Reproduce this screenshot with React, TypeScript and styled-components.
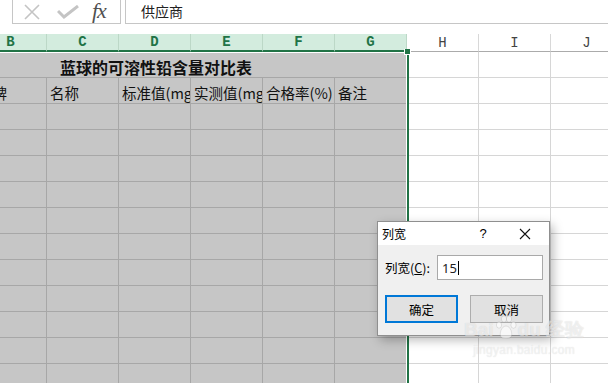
import React from "react";
import styled, { createGlobalStyle } from "styled-components";

const GREEN = "#217346";

const GlobalStyle = createGlobalStyle`
  html, body {
    margin: 0;
    padding: 0;
    background: #fff;
  }
  body {
    font-family: "Noto Sans CJK SC", "Liberation Sans", sans-serif;
  }
`;

const SWindow = styled.div`
  position: relative;
  width: 608px;
  height: 383px;
  overflow: hidden;
  background: #fff;
`;

/* formula bar */
const SFormulaBar = styled.div`
  display: flex;
  align-items: flex-start;
  gap: 4px;
  height: 34px;
  padding-left: 12px;
`;

const SIconBox = styled.div`
  display: flex;
  align-items: center;
  width: 109px;
  height: 24px;
  box-sizing: border-box;
  border: 1px solid #c6c6c6;
  border-top: none;
  padding-left: 10px;
  gap: 16px;
`;

const SFx = styled.span`
  font-family: "Liberation Serif", serif;
  font-style: italic;
  font-size: 22px;
  letter-spacing: -1px;
  color: #505050;
  line-height: 1;
  margin-left: -3px;
  margin-top: -2px;
`;

const SFormulaInput = styled.div`
  flex: 1;
  height: 24px;
  box-sizing: border-box;
  border-left: 1px solid #c6c6c6;
  border-bottom: 1px solid #c6c6c6;
  padding-left: 15px;
  font-size: 14px;
  line-height: 23px;
  color: #222;
`;

/* sheet */
const SSheet = styled.div`
  display: grid;
  grid-template-columns: repeat(10, 72px);
  grid-template-rows: 18px;
  grid-auto-rows: 26px;
  margin-left: -97px;
  width: 720px;
`;

const SHeaderCell = styled.div<{ $selected?: boolean }>`
  height: 18px;
  box-sizing: border-box;
  display: flex;
  align-items: center;
  justify-content: center;
  font-family: "Liberation Mono", monospace;
  font-size: 14px;
  font-weight: ${(p) => (p.$selected ? 700 : 400)};
  color: ${(p) => (p.$selected ? GREEN : "#444")};
  background: ${(p) => (p.$selected ? "#d3ecde" : "#fff")};
  border-right: 1px solid ${(p) => (p.$selected ? "#bcd8c7" : "#d8d8d8")};
  border-bottom: ${(p) => (p.$selected ? `2px solid ${GREEN}` : "1px solid #ababab")};
`;

const SCell = styled.div<{ $selected?: boolean; $span?: number; $bold?: boolean; $center?: boolean }>`
  box-sizing: border-box;
  grid-column: span ${(p) => p.$span || 1};
  display: flex;
  align-items: flex-end;
  justify-content: ${(p) => (p.$center ? "center" : "flex-start")};
  padding: 0 0 1px 3px;
  overflow: hidden;
  white-space: nowrap;
  font-size: ${(p) => (p.$bold ? "16px" : "14.5px")};
  font-weight: ${(p) => (p.$bold ? 700 : 400)};
  line-height: 18px;
  color: #111;
  background: ${(p) => (p.$selected ? "#c6c6c6" : "#fff")};
  border-right: 1px solid ${(p) => (p.$selected ? "#a7a7a7" : "#d6d6d6")};
  border-bottom: 1px solid ${(p) => (p.$selected ? "#a7a7a7" : "#d6d6d6")};
`;

const SHeaderRow = styled.div`
  display: contents;
`;

/* selection overlay */
const SSelection = styled.div`
  position: absolute;
  left: 0;
  top: 52px;
  width: 409px;
  bottom: 0;
  box-sizing: border-box;
  border-right: 2px solid ${GREEN};
  box-shadow: inset -1px 0 0 #fff, inset 0 1px 0 #fff;
  pointer-events: none;
`;

const SFillHandle = styled.div`
  position: absolute;
  left: 404px;
  top: 49px;
  width: 5px;
  height: 5px;
  background: ${GREEN};
  border: 1px solid #fff;
  border-top: none;
`;

/* dialog */
const SDialog = styled.div`
  position: absolute;
  left: 377px;
  top: 221px;
  width: 173px;
  height: 115px;
  box-sizing: border-box;
  border: 1px solid #8f8f8f;
  background: #f0f0f0;
  box-shadow: 3px 4px 10px rgba(0, 0, 0, 0.28);
  display: flex;
  flex-direction: column;
  font-size: 12px;
  color: #000;
`;

const STitleBar = styled.div`
  display: flex;
  align-items: center;
  height: 23px;
  background: #fff;
  padding-left: 4px;
`;

const STitleText = styled.span`
  flex: 1;
  font-size: 12px;
`;

const STitleButton = styled.div<{ $w: number }>`
  width: ${(p) => p.$w}px;
  display: flex;
  justify-content: center;
  align-items: center;
  font-size: 13px;
  font-family: "Liberation Sans", sans-serif;
`;

const SDialogBody = styled.div`
  display: flex;
  flex-direction: column;
  padding: 10px 6px 0 7px;
`;

const SFieldRow = styled.div`
  display: flex;
  align-items: center;
  justify-content: space-between;
`;

const SLabel = styled.span`
  font-size: 12.5px;
  & u {
    text-decoration-thickness: 1px;
  }
`;

const SInput = styled.div`
  width: 106px;
  height: 25px;
  box-sizing: border-box;
  border: 1px solid #a9a9a9;
  background: #fff;
  display: flex;
  align-items: center;
  padding-left: 4px;
  font-family: "Noto Sans", sans-serif;
  font-size: 13px;
  color: #222;
`;

const SCaret = styled.span`
  display: inline-block;
  width: 1px;
  height: 14px;
  background: #000;
  margin-left: 1px;
`;

const SButtonRow = styled.div`
  display: flex;
  justify-content: space-between;
  margin-top: 15px;
`;

const SButton = styled.div<{ $primary?: boolean }>`
  width: 73px;
  height: 28px;
  box-sizing: border-box;
  display: flex;
  align-items: center;
  justify-content: center;
  background: #e1e1e1;
  border: ${(p) => (p.$primary ? "2px solid #0078d7" : "1px solid #adadad")};
  font-size: 12.5px;
`;

/* watermark */
const SWatermark = styled.div`
  position: absolute;
  left: 464px;
  top: 314px;
  display: flex;
  flex-direction: column;
  align-items: center;
  color: rgba(255, 255, 255, 0.55);
  text-shadow: 0 0 1px rgba(0, 0, 0, 0.15);
  pointer-events: none;
  font-family: "Liberation Sans", sans-serif;
`;

const SWmTop = styled.div`
  display: flex;
  align-items: flex-end;
  font-size: 19px;
  font-weight: 700;
  line-height: 21px;
  gap: 1px;
`;

const SWmSub = styled.div`
  font-size: 12px;
  letter-spacing: 0.3px;
  margin-top: 3px;
`;

const CancelIcon = () => (
  <svg width="18" height="16" viewBox="0 0 18 16">
    <path d="M2 1 L16 15 M16 1 L2 15" stroke="#c4c4c4" strokeWidth="1.6" fill="none" />
  </svg>
);

const CheckIcon = () => (
  <svg width="22" height="14" viewBox="0 0 22 14">
    <path d="M1 6 L7 12 L21 1" stroke="#c4c4c4" strokeWidth="3" fill="none" />
  </svg>
);

const CloseIcon = () => (
  <svg width="12" height="12" viewBox="0 0 12 12">
    <path d="M1 1 L11 11 M11 1 L1 11" stroke="#111" strokeWidth="1.1" fill="none" />
  </svg>
);

const Paw = () => (
  <svg width="22" height="26" viewBox="0 0 22 26">
    <g fill="rgba(255,255,255,0.55)" stroke="rgba(0,0,0,0.12)" strokeWidth="0.8">
      <ellipse cx="4" cy="11" rx="2.6" ry="3.2" />
      <ellipse cx="9" cy="5" rx="2.6" ry="3.2" />
      <ellipse cx="14" cy="5" rx="2.6" ry="3.2" />
      <ellipse cx="18.5" cy="11" rx="2.6" ry="3.2" />
      <path d="M11 12 C6 12 4 21 6 23 C8 25 14 25 16 23 C18 21 16 12 11 12 Z" />
    </g>
  </svg>
);

const COLS = ["A", "B", "C", "D", "E", "F", "G", "H", "I", "J"];
const isSel = (i: number) => i >= 0 && i <= 6;

const headings = ["", "品牌", "名称", "标准值(mg/kg)", "实测值(mg/kg)", "合格率(%)", "备注"];

export default function App() {
  const emptyRows = Array.from({ length: 11 });

  return (
    <SWindow>
      <GlobalStyle />
      <SFormulaBar>
        <SIconBox>
          <CancelIcon />
          <CheckIcon />
          <SFx>fx</SFx>
        </SIconBox>
        <SFormulaInput>供应商</SFormulaInput>
      </SFormulaBar>

      <SSheet>
        <SHeaderRow>
          {COLS.map((c, i) => (
            <SHeaderCell key={c} $selected={i >= 1 && i <= 6}>
              {c}
            </SHeaderCell>
          ))}
        </SHeaderRow>

        <SCell $selected $span={7} $bold $center>
          蓝球的可溶性铅含量对比表
        </SCell>
        <SCell />
        <SCell />
        <SCell />

        {COLS.map((c, i) => (
          <SCell key={"h" + c} $selected={isSel(i)}>
            {headings[i] || ""}
          </SCell>
        ))}

        {emptyRows.map((_, r) =>
          COLS.map((c, i) => <SCell key={r + c} $selected={isSel(i)} />)
        )}
      </SSheet>

      <SSelection />
      <SFillHandle />

      <SDialog>
        <STitleBar>
          <STitleText>列宽</STitleText>
          <STitleButton $w={30}>?</STitleButton>
          <STitleButton $w={40} style={{ marginLeft: 7, marginRight: 4 }}>
            <CloseIcon />
          </STitleButton>
        </STitleBar>
        <SDialogBody>
          <SFieldRow>
            <SLabel>
              列宽(<u>C</u>):
            </SLabel>
            <SInput>
              15
              <SCaret />
            </SInput>
          </SFieldRow>
          <SButtonRow>
            <SButton $primary>确定</SButton>
            <SButton>取消</SButton>
          </SButtonRow>
        </SDialogBody>
      </SDialog>

      <SWatermark>
        <SWmTop>
          <span>Bai</span>
          <Paw />
          <span>du 经验</span>
        </SWmTop>
        <SWmSub>jingyan.baidu.com</SWmSub>
      </SWatermark>
    </SWindow>
  );
}
